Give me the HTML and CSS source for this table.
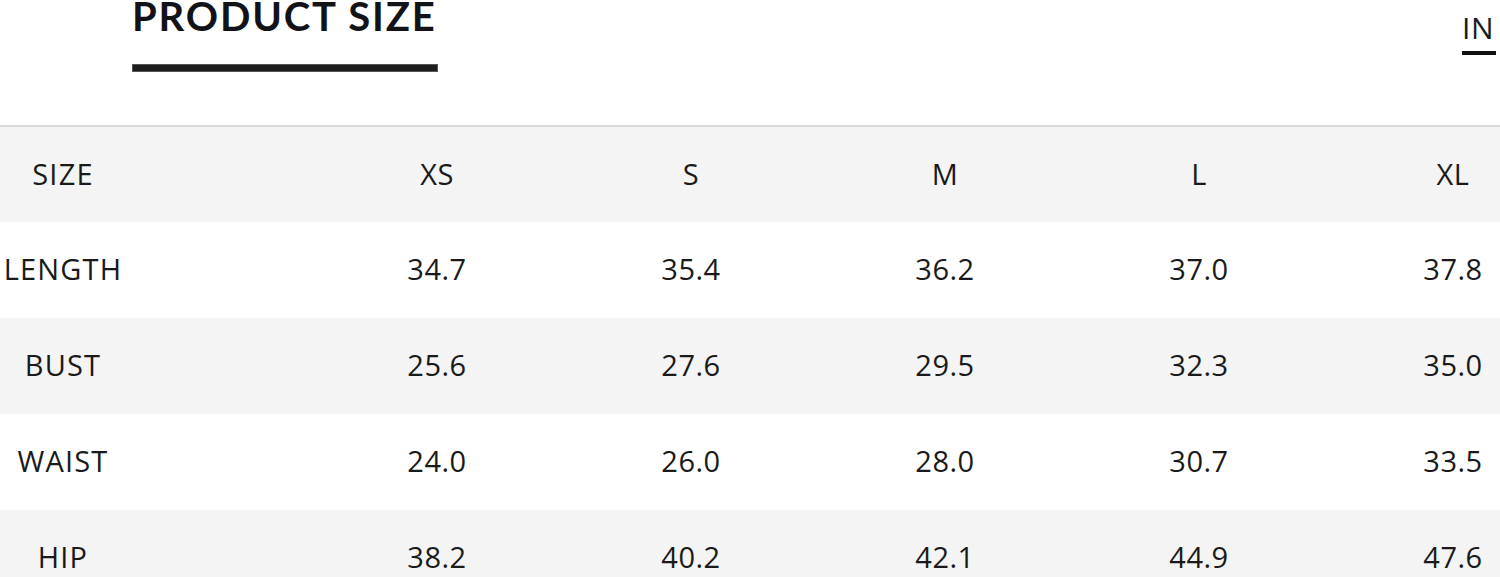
FILE: index.html
```html
<!DOCTYPE html>
<html lang="en">
<head>
<meta charset="utf-8">
<title>Product Size</title>
<link rel="stylesheet" href="styles.css">
</head>
<body>
<div class="page">
  <header class="top">
    <div class="title-block">
      <h1 class="title">PRODUCT SIZE</h1>
      <div class="title-bar"></div>
    </div>
    <div class="unit">
      <span class="unit-text">IN</span>
      <div class="unit-bar"></div>
    </div>
  </header>
  <div class="table">
    <div class="row row-head">
      <div class="cell label">SIZE</div>
      <div class="cell">XS</div>
      <div class="cell">S</div>
      <div class="cell">M</div>
      <div class="cell">L</div>
      <div class="cell">XL</div>
    </div>
    <div class="row">
      <div class="cell label">LENGTH</div>
      <div class="cell">34.7</div>
      <div class="cell">35.4</div>
      <div class="cell">36.2</div>
      <div class="cell">37.0</div>
      <div class="cell">37.8</div>
    </div>
    <div class="row row-alt">
      <div class="cell label">BUST</div>
      <div class="cell">25.6</div>
      <div class="cell">27.6</div>
      <div class="cell">29.5</div>
      <div class="cell">32.3</div>
      <div class="cell">35.0</div>
    </div>
    <div class="row">
      <div class="cell label">WAIST</div>
      <div class="cell">24.0</div>
      <div class="cell">26.0</div>
      <div class="cell">28.0</div>
      <div class="cell">30.7</div>
      <div class="cell">33.5</div>
    </div>
    <div class="row row-alt">
      <div class="cell label">HIP</div>
      <div class="cell">38.2</div>
      <div class="cell">40.2</div>
      <div class="cell">42.1</div>
      <div class="cell">44.9</div>
      <div class="cell">47.6</div>
    </div>
  </div>
</div>
</body>
</html>
```
FILE: styles.css
```css
html, body {
  margin: 0;
  padding: 0;
  background: #ffffff;
  overflow: hidden;
}

.page {
  width: 1500px;
  height: 577px;
  overflow: hidden;
  font-family: "Open Sans", "Liberation Sans", sans-serif;
  color: #1a1a1a;
}

.top {
  display: flex;
  justify-content: space-between;
  align-items: flex-start;
  height: 125px;
  padding-left: 132px;
  padding-right: 4px;
  box-sizing: border-box;
}

.title-block {
  display: flex;
  flex-direction: column;
}

.title {
  margin: 0;
  font-family: Lato, "Open Sans", sans-serif;
  font-weight: 700;
  font-size: 40px;
  line-height: 32px;
  letter-spacing: 1.85px;
  color: #121318;
  padding-right: 1px;
}

.title-bar {
  margin-top: 32px;
  height: 8px;
  background: #1d1d1d;
  box-shadow: 0 0 0 1px #555 inset;
}

.unit {
  display: flex;
  flex-direction: column;
  padding-top: 13px;
}

.unit-text {
  font-size: 30px;
  line-height: 30px;
  color: #1a1a22;
  letter-spacing: 0.5px;
  padding-right: 2px;
}

.unit-bar {
  margin-top: 8px;
  height: 4px;
  background: #111;
}

.table {
  width: 1580px;
  border-top: 2px solid #d8d8d8;
}

.row {
  display: grid;
  grid-template-columns: 310px repeat(5, 254px);
  align-items: center;
  height: 96px;
  background: #ffffff;
  font-size: 29px;
  line-height: 40px;
  letter-spacing: 0.5px;
}

.row-head,
.row-alt {
  background: #f4f4f4;
}

.row-head {
  height: 95px;
}

.cell {
  text-align: center;
  padding-bottom: 2px;
}

.cell.label {
  width: 126px;
  letter-spacing: 1.2px;
}
```
